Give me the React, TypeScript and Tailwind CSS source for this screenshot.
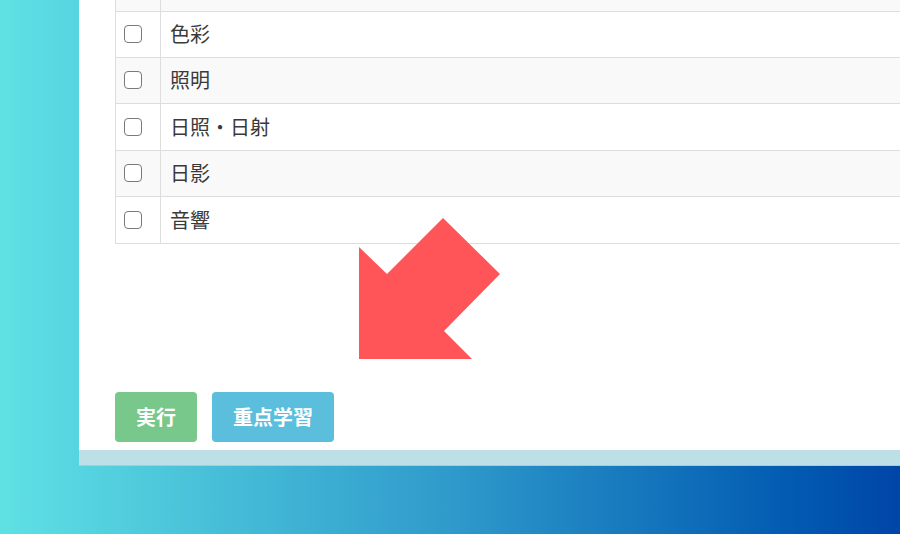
const ROWS = ["", "色彩", "照明", "日照・日射", "日影", "音響"];

function Checkbox() {
  return <span className="block h-[18px] w-[18px] rounded-[4px] border border-[#7a7a7a] bg-white" />;
}

export default function App() {
  return (
    <div
      className="relative h-[534px] w-[900px] overflow-hidden bg-gradient-to-r from-[#5fe1e4] via-[#2f9acb] to-[#0045a8]"
      style={{ fontFamily: '"Noto Sans CJK JP", "Noto Sans", sans-serif' }}
    >
      <div className="ml-[79px] w-[821px] overflow-hidden">
        <div className="h-[450px] overflow-hidden bg-white pl-[36px]">
          <table className="-mt-[35px] w-[900px] border-collapse border-l border-[#dddddd] text-[20px] text-[#3a3a3a]">
            <tbody>
              {ROWS.map((label, i) => (
                <tr key={i} className={i % 2 === 0 ? "bg-[#f9f9f9]" : "bg-white"}>
                  <td className={`${i === 3 || i === 5 ? "h-[47px]" : "h-[46px]"} w-[45px] border-b border-r border-[#dddddd] pl-[8px] align-middle`}>
                    <Checkbox />
                  </td>
                  <td className="border-b border-[#dddddd] pl-[9px] align-middle leading-none">{label}</td>
                </tr>
              ))}
            </tbody>
          </table>
          <div className="mt-[148px] flex gap-[15px]">
            <button className="h-[50px] w-[82px] rounded-[4px] bg-[#78c88b] text-[20px] font-semibold text-white">実行</button>
            <button className="h-[50px] w-[122px] rounded-[4px] bg-[#5bbedd] text-[20px] font-semibold text-white">重点学習</button>
          </div>
        </div>
        <div className="h-[16px] border-b border-[#a8cdd4] bg-[#bde0e7]" />
      </div>
      <svg className="absolute left-0 top-0" width="900" height="534" viewBox="0 0 900 534">
        <polygon points="443,218 500,274 444,331 472,359 359,359 359,247 387,274" fill="#ff5558" />
      </svg>
    </div>
  );
}
